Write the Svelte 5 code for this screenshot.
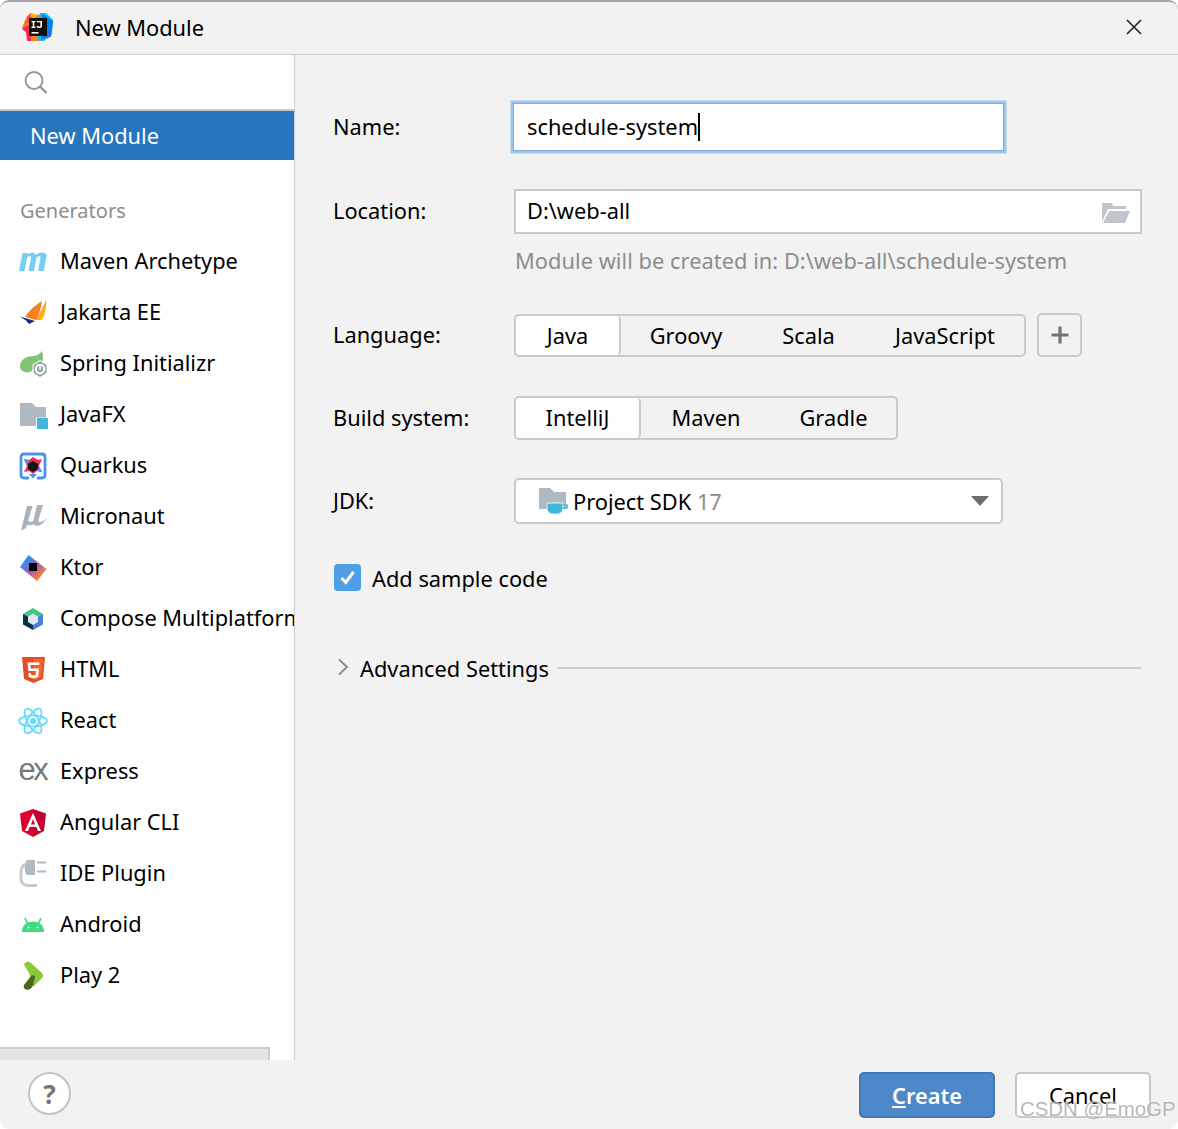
<script>
  const gens = ['Maven Archetype','Jakarta EE','Spring Initializr','JavaFX','Quarkus','Micronaut','Ktor','Compose Multiplatform','HTML','React','Express','Angular CLI','IDE Plugin','Android','Play 2'];
</script>

<div class="window">
  <header class="title">
    <svg class="logo" width="32" height="32" viewBox="0 0 32 32">
      <path d="M3 8 L8 1 L15 3 L22 1 L31 8 L29 25 L20 29 L7 29 L5 20 L0 16 Z" fill="#fc801d"/>
      <path d="M18 1 L24 1 L31 8 L30 22 L22 29 L15 28 Z" fill="#07c3f2"/>
      <path d="M20 2 L31 9 L29 24 L19 28 Z" fill="#087cfa"/>
      <path d="M2 15 L8 13 L9 29 L5 29 L4 20 L0 17 Z" fill="#fe2857"/>
      <path d="M3 8 L8 1 L16 3 L8 9 Z" fill="#fdb60d"/>
      <path d="M5 4 L9 2 L10 10 L4 11 Z" fill="#fe2857" opacity=".7"/>
      <rect x="7" y="6" width="18" height="18" fill="#140d0d"/>
      <rect x="9.5" y="20" width="7" height="1.6" fill="#fff"/>
      <path d="M9.5 9 H13.5 V10.3 H12.3 V14.7 H13.5 V16 H9.5 V14.7 H10.7 V10.3 H9.5 Z M15 9 H20 V14 C20 16.5 15.5 16.8 14.5 14.5 L15.8 13.7 C16.2 14.9 18.4 14.9 18.4 13.7 V10.3 H15 Z" fill="#fff"/>
    </svg>
    <span class="title-text">New Module</span>
    <svg class="close" width="18" height="18" viewBox="0 0 18 18"><path d="M2 2 L16 16 M16 2 L2 16" stroke="#222" stroke-width="1.6"/></svg>
  </header>

  <div class="body">
    <aside class="side">
      <div class="search">
        <svg width="26" height="26" viewBox="0 0 26 26" fill="none" stroke="#8e979e"><circle cx="11" cy="11.5" r="8.5" stroke-width="1.8"/><path d="M17 17.5 L23.500 24" stroke-width="2.4"/></svg>
      </div>
      <div class="selected">New Module</div>
      <div class="section">Generators</div>
      <ul class="list">
        {#each gens as g, i}
          <li>
            <svg class="ico" width="30" height="30" viewBox="0 0 30 30">
              {#if i === 0}
                <path d="M1 24 L4.500 6 H10 L9.700 8 C12 5 16.500 4.500 17.700 8 C20 5 29.500 3.500 28.500 10 L25.700 24 H20 L22.500 11 C23 8.500 19.500 9 18.500 11 L15.800 24 H10.500 L13 11 C13.500 8.500 10 9 9 11 L6.500 24 Z" fill="#76cfee"/>
              {:else if i === 1}
                <path d="M17 22 C22 15 26 8 28 1 C28.500 10 27 17 24 22 Z" fill="#fbb018"/>
                <path d="M7 19 C12 11 18 7 24 3 C23 10 21 16 18 22 Z" fill="#f58220"/>
                <path d="M2 18.500 L17 23 L11 26 L8 22.500 Z" fill="#1b2a7a"/>
              {:else if i === 2}
                <path d="M2 17 C2 10 9 7.500 15 7 C19 6.500 22 5 24 2 C26 9 25 13 22 15 L12 23 C6 24 2 22 2 17 Z" fill="#82c375"/>
                <path d="M22 11 L29.500 15.500 V24.500 L22 29 L14.500 24.500 V15.500 Z" fill="#fff"/>
                <path d="M22 12 L28.500 16 V24 L22 28 L15.500 24 V16 Z" fill="#9aa5ad"/>
                <circle cx="22" cy="20" r="4.200" fill="none" stroke="#fff" stroke-width="2"/>
                <rect x="21.200" y="16.500" width="1.600" height="4" fill="#fff"/>
              {:else if i === 3}
                <path d="M2 3 H14 L18 7 H28 V26 H2 Z" fill="#afb9c1"/>
                <rect x="18" y="17.500" width="12" height="12" fill="#fff"/>
                <rect x="19" y="18" width="11" height="11" fill="#40b6e0"/>
              {:else if i === 4}
                <path d="M11 27 H6 C4 27 3 26 3 24 V6 C3 4 4 3 6 3 H24 C26 3 27 4 27 6 V24 C27 26 26 27 24 27 H19" fill="none" stroke="#4695eb" stroke-width="2.800"/>
                <path d="M15 27.500 L11 23 H19 Z" fill="#4695eb"/>
                <path d="M15 6 L20 9 L24 8 L21 15 L24 21 L19 20 L15 23 L11 20 L6 21 L9 15 L6 8 L11 9 Z" fill="#ee2a57"/>
                <path d="M6 8 L11 9 L9 15 Z M24 21 L19 20 L21 15 Z" fill="#4695eb"/>
                <path d="M15 10 L20 13 V18 L15 21 L10 18 V13 Z" fill="#141414"/>
              {:else if i === 5}
                <path d="M9 4 H14.500 L8 26 L3 29 Z" fill="#a8b3bc"/>
                <path d="M8.500 17 C10 20.500 14 20.500 16.500 18 L16 22 C13 24 9 23.500 7.500 21 Z" fill="#a8b3bc"/>
                <path d="M19 3 H25 L20.500 18 C20 21 24 21 29 16 C26 21 21 25 17.500 23.500 C15 22.500 15 20 15.500 18 Z" fill="#a8b3bc"/>
              {:else if i === 6}
                <defs><linearGradient id="kt" x1="0" y1="0" x2="1" y2="1"><stop offset=".15" stop-color="#1a9bf5"/><stop offset=".5" stop-color="#a05ac0"/><stop offset=".85" stop-color="#fb8b15"/></linearGradient></defs>
                <path d="M10.500 2 L28.500 16 L19 28 L2 14 Z" fill="url(#kt)"/>
                <rect x="11" y="10" width="8" height="8" fill="#000"/>
              {:else if i === 7}
                <path d="M15 4 L25 10 L15 15 L5 10 Z" fill="#41c77d"/>
                <path d="M5 10 L15 15 V26 L5 20.500 Z" fill="#0a3145"/>
                <path d="M25 10 L15 15 V26 L25 20.500 Z" fill="#4a80e0"/>
                <path d="M15 9.500 L20 12.500 V18 L15 21 L10 18 V12.500 Z" fill="#dcebf2"/>
              {:else if i === 8}
                <path d="M4 2 H27 L25 24 L15.500 28 L6 24 Z" fill="#e44d26"/>
                <path d="M15.500 4 H25 L23.400 22.700 L15.500 26 Z" fill="#f16529"/>
                <path d="M21.500 7.500 H9.500 L10.300 16 H18.200 L17.900 19.800 L15.500 20.500 L13 19.800 L12.800 18 H10.300 L10.700 22 L15.500 23.500 L20.300 22 L21 13.500 H12.800 L12.500 10 H21.200 Z" fill="#fff"/>
              {:else if i === 9}
                <g fill="none" stroke="#61dafb" stroke-width="1.700">
                  <ellipse cx="15" cy="15" rx="14" ry="5.500"/>
                  <ellipse cx="15" cy="15" rx="14" ry="5.500" transform="rotate(60 15 15)"/>
                  <ellipse cx="15" cy="15" rx="14" ry="5.500" transform="rotate(120 15 15)"/>
                </g>
                <circle cx="15" cy="15" r="3" fill="#61dafb"/>
              {:else if i === 10}
                <text x="0.500" y="23" class="ex">ex</text>
              {:else if i === 11}
                <path d="M15 1 L2 5.500 L4 23 L15 29 Z" fill="#dd0031"/>
                <path d="M15 1 L28 5.500 L26 23 L15 29 Z" fill="#c3002f"/>
                <path d="M15 5 L7 23 H10 L11.600 19 H18.400 L20 23 H23 Z M13 16.500 L15 11 L17 16.500 Z" fill="#fff"/>
              {:else if i === 12}
                <path d="M9 1 H17 V16 H9 C6 14 6 3 9 1 Z" fill="#b0bac2"/>
                <path d="M19 3.500 H28 M19 12.500 H28" stroke="#b0bac2" stroke-width="2.200"/>
                <path d="M7 5 C3.500 7 3 10 3 14 V20 C3 24 6 26.500 10 26.500 H19" fill="none" stroke="#c2cbd2" stroke-width="2.800"/>
              {:else if i === 13}
                <g transform="translate(0 -2)">
                  <path d="M4 24 C4 17 9 13.500 15 13.500 C21 13.500 26 17 26 24 Z" fill="#3ddc84"/>
                  <path d="M9.500 15.500 L7 10 M20.500 15.500 L23 10" stroke="#3ddc84" stroke-width="1.800"/>
                  <circle cx="10.500" cy="19.500" r="1" fill="#fff"/><circle cx="19.500" cy="19.500" r="1" fill="#fff"/>
                </g>
              {:else if i === 14}
                <path d="M6 4 C7 0 11 0 13 2 L24 12 C25.500 13.500 25.500 15.500 24 17 L15 26 L11 12 Z" fill="#8cc83c"/>
                <path d="M6 24 L13 15 C15 13.500 17 14 17 16 L15 24 C13 29 10 29 8 28.500 C6 28 5 26 6 24 Z" fill="#48691f"/>
              {/if}
            </svg>
            <span>{g}</span>
          </li>
        {/each}
      </ul>
      <div class="hscroll"></div>
    </aside>

    <main class="form">
      <div class="row r-name">
        <span class="lbl">Name:</span>
        <div class="input focus"><span>schedule-system</span><i class="caret"></i></div>
      </div>
      <div class="row r-loc">
        <span class="lbl">Location:</span>
        <div class="input loc">
          <span>D:\web-all</span>
          <svg width="30" height="24" viewBox="0 0 30 24"><path d="M1 3 H10 L13 6 H25 V9 H7 L1 22 Z M8 11 H29 L24 23 H2 Z" fill="#c0c6cb"/></svg>
        </div>
      </div>
      <div class="hint">Module will be created in: D:\web-all\schedule-system</div>
      <div class="row r-lang">
        <span class="lbl">Language:</span>
        <div class="seg">
          <span class="on w-java">Java</span><span class="w-groovy">Groovy</span><span class="w-scala">Scala</span><span class="w-js">JavaScript</span>
        </div>
        <div class="plus"><svg width="20" height="20" viewBox="0 0 20 20"><path d="M10 1.500 V18.500 M1.500 10 H18.500" stroke="#737373" stroke-width="3.200"/></svg></div>
      </div>
      <div class="row r-build">
        <span class="lbl">Build system:</span>
        <div class="seg">
          <span class="on w-ij">IntelliJ</span><span class="w-mvn">Maven</span><span class="w-grd">Gradle</span>
        </div>
      </div>
      <div class="row r-jdk">
        <span class="lbl">JDK:</span>
        <div class="combo">
          <svg width="30" height="28" viewBox="0 0 30 28">
            <path d="M0 1 H11 L15 5 H27 V22 H0 Z" fill="#afb9c1"/>
            <path d="M8 16 H24 V21 C24 25 21 27 18 27 H14 C11 27 8 25 8 21 Z" fill="#40b6e0" stroke="#f2f2f2" stroke-width="1"/>
            <path d="M24 18 H28 V21 H24" fill="none" stroke="#40b6e0" stroke-width="1.600"/>
          </svg>
          <span class="sdk">Project SDK <em>17</em></span>
          <svg class="arrow" width="18" height="10" viewBox="0 0 18 10"><path d="M0 0 H18 L9 10 Z" fill="#6e6e6e"/></svg>
        </div>
      </div>
      <div class="check">
        <span class="box"><svg width="27" height="27" viewBox="0 0 27 27"><path d="M7.500 14 L11.800 18.500 L19.500 8" fill="none" stroke="#fff" stroke-width="3"/></svg></span>
        <span class="check-text">Add sample code</span>
      </div>
      <div class="adv">
        <svg width="12" height="18" viewBox="0 0 12 18"><path d="M2 1.500 L10 9 L2 16.500" fill="none" stroke="#8a8a8a" stroke-width="1.900"/></svg>
        <span>Advanced Settings</span>
        <i class="rule"></i>
      </div>
    </main>
  </div>

  <footer class="foot">
    <div class="help">?</div>
    <div class="btns">
      <div class="btn primary"><span class="cap"><u>C</u>reate</span></div>
      <div class="btn cancel"><span class="cap">Cancel</span><span class="mark">CSDN @EmoGP</span></div>
    </div>
  </footer>
</div>

<style>
  :global(body) { margin: 0; background: #fff; }
  .window {
    width: 1178px; height: 1129px; box-sizing: border-box; display: flex; flex-direction: column;
    background: #f2f2f2; border-radius: 9px; border-top: 2px solid #a8a8a8; overflow: hidden;
    font-family: "Noto Sans", "Open Sans", sans-serif; font-size: 21.8px; color: #000; line-height: 30px;
  }
  .title { height: 52px; flex: none; display: flex; align-items: center; border-bottom: 1px solid #cdcdcd; padding-left: 22px; }
  .logo { flex: none; }
  .title-text { margin-left: 21px; }
  .close { margin-left: auto; margin-right: 35px; margin-top: -2px; }
  .body { flex: 1; display: flex; min-height: 0; }
  .side { width: 295px; box-sizing: border-box; flex: none; background: #fff; border-right: 1px solid #cdcdcd; display: flex; flex-direction: column; overflow: hidden; }
  .search { height: 54px; flex: none; border-bottom: 2px solid #c9c9c9; display: flex; align-items: center; padding-left: 23px; }
  .selected { height: 49px; flex: none; box-sizing: border-box; background: #2675bf; color: #fff; padding-left: 30px; display: flex; align-items: center; }
  .section { color: #8c8c8c; font-size: 20px; padding-left: 20px; margin-top: 36px; height: 30px; }
  .list { list-style: none; margin: 10px 0 0; padding: 0; }
  li { height: 51px; display: flex; align-items: center; white-space: nowrap; padding-left: 18px; }
  li span { margin-left: 12px; padding-bottom: 2px; }
  .ico { flex: none; }
  .ex { font-family: "Liberation Sans", sans-serif; font-size: 31px; fill: #777; letter-spacing: -2.500px; }
  .hscroll { margin-top: auto; width: 270px; height: 13px; flex: none; box-sizing: border-box; background: #e4e4e4; border: 2px solid #cdcdcd; border-bottom: 0; border-left: 0; }

  .form { flex: 1; padding: 48px 36px 0 39px; display: flex; flex-direction: column; min-width: 0; }
  .row { display: flex; align-items: center; }
  .lbl { width: 181px; flex: none; margin: -1px 0 0 -1px; }
  .input { background: #fff; box-sizing: border-box; display: flex; align-items: center; padding-left: 11px; }
  .input > span { padding-bottom: 1px; }
  .r-name { height: 48px; }
  .focus { width: 491px; height: 48px; margin-left: -1px; border: 1px solid #82add9; box-shadow: 0 0 0 2.5px #9cc5ef; padding-left: 13px; }
  .caret { width: 1.5px; height: 28px; background: #000; }
  .r-loc { height: 45px; margin-top: 38px; }
  .loc { flex: 1; height: 45px; border: 2px solid #c9c9c9; justify-content: space-between; padding-right: 9px; }
  .hint { color: #8c8c8c; margin: 12px 0 0 181px; height: 30px; white-space: nowrap; letter-spacing: .04px; }
  .r-lang { height: 43px; margin-top: 38px; }
  .r-build { height: 44px; margin-top: 39px; }
  .seg { height: 100%; box-sizing: border-box; display: flex; border: 2px solid #c9c9c9; border-radius: 5px; background: #f2f2f2; }
  .seg span { display: flex; align-items: center; justify-content: center; box-sizing: border-box; }
  .seg .on { background: #fff; border-right: 2px solid #c9c9c9; border-radius: 4px; }
  .w-java { width: 105px; }
  .w-groovy { width: 130px; }
  .w-scala { width: 115px; }
  .w-js { width: 158px; }
  .w-ij { width: 125px; }
  .w-mvn { width: 130px; }
  .w-grd { width: 125px; }
  .plus { width: 45px; height: 44px; box-sizing: border-box; border: 2px solid #c9c9c9; border-radius: 5px; margin-left: 11px; align-self: flex-start; margin-top: -1px; display: flex; align-items: center; justify-content: center; }
  .r-jdk { height: 46px; margin-top: 38px; }
  .combo { width: 489px; height: 46px; box-sizing: border-box; background: #fff; border: 2px solid #c9c9c9; border-radius: 5px; display: flex; align-items: center; padding-left: 23px; }
  .sdk { margin-left: 4px; padding-top: 2px; }
  .sdk em { font-style: normal; color: #8c8c8c; }
  .arrow { margin-left: auto; margin-right: 12px; }
  .check { display: flex; align-items: center; height: 27px; margin-top: 40px; }
  .box { width: 27px; height: 27px; border-radius: 4px; background: #4f9fe6; margin-right: 11px; display: block; }
  .box svg { display: block; }
  .check-text { padding-top: 2px; }
  .adv { display: flex; align-items: center; height: 30px; margin-top: 62px; }
  .adv svg { margin: -2px 11px 0 3px; }
  .adv span { white-space: nowrap; padding-top: 2px; }
  .rule { flex: 1; height: 2px; background: #cdcdcd; margin: 0 1px 0 8px; }

  .foot { height: 69px; box-sizing: border-box; flex: none; display: flex; padding: 12px 27px 0 28px; justify-content: space-between; align-items: flex-start; }
  .help { width: 43px; height: 43px; box-sizing: border-box; border-radius: 50%; background: #fff; border: 2px solid #c4c4c4; color: #777; font-weight: 700; font-size: 26px; display: flex; align-items: center; justify-content: center; }
  .btns { display: flex; gap: 20px; }
  .btn { width: 136px; height: 46px; box-sizing: border-box; border-radius: 5px; display: flex; align-items: center; justify-content: center; }
  .cap { padding-top: 2px; }
  .primary { background: #4d88c9; border: 2px solid #4276b3; color: #fff; font-weight: 600; }
  .cancel { background: #fff; border: 2px solid #c6c6c6; position: relative; }
  .mark { position: absolute; left: 3px; top: 22px; white-space: nowrap; font-family: "Liberation Sans", sans-serif; font-size: 20.4px; line-height: 26px; color: rgba(170,170,170,.85); text-shadow: 0 0 2px rgba(255,255,255,.9); }
</style>
